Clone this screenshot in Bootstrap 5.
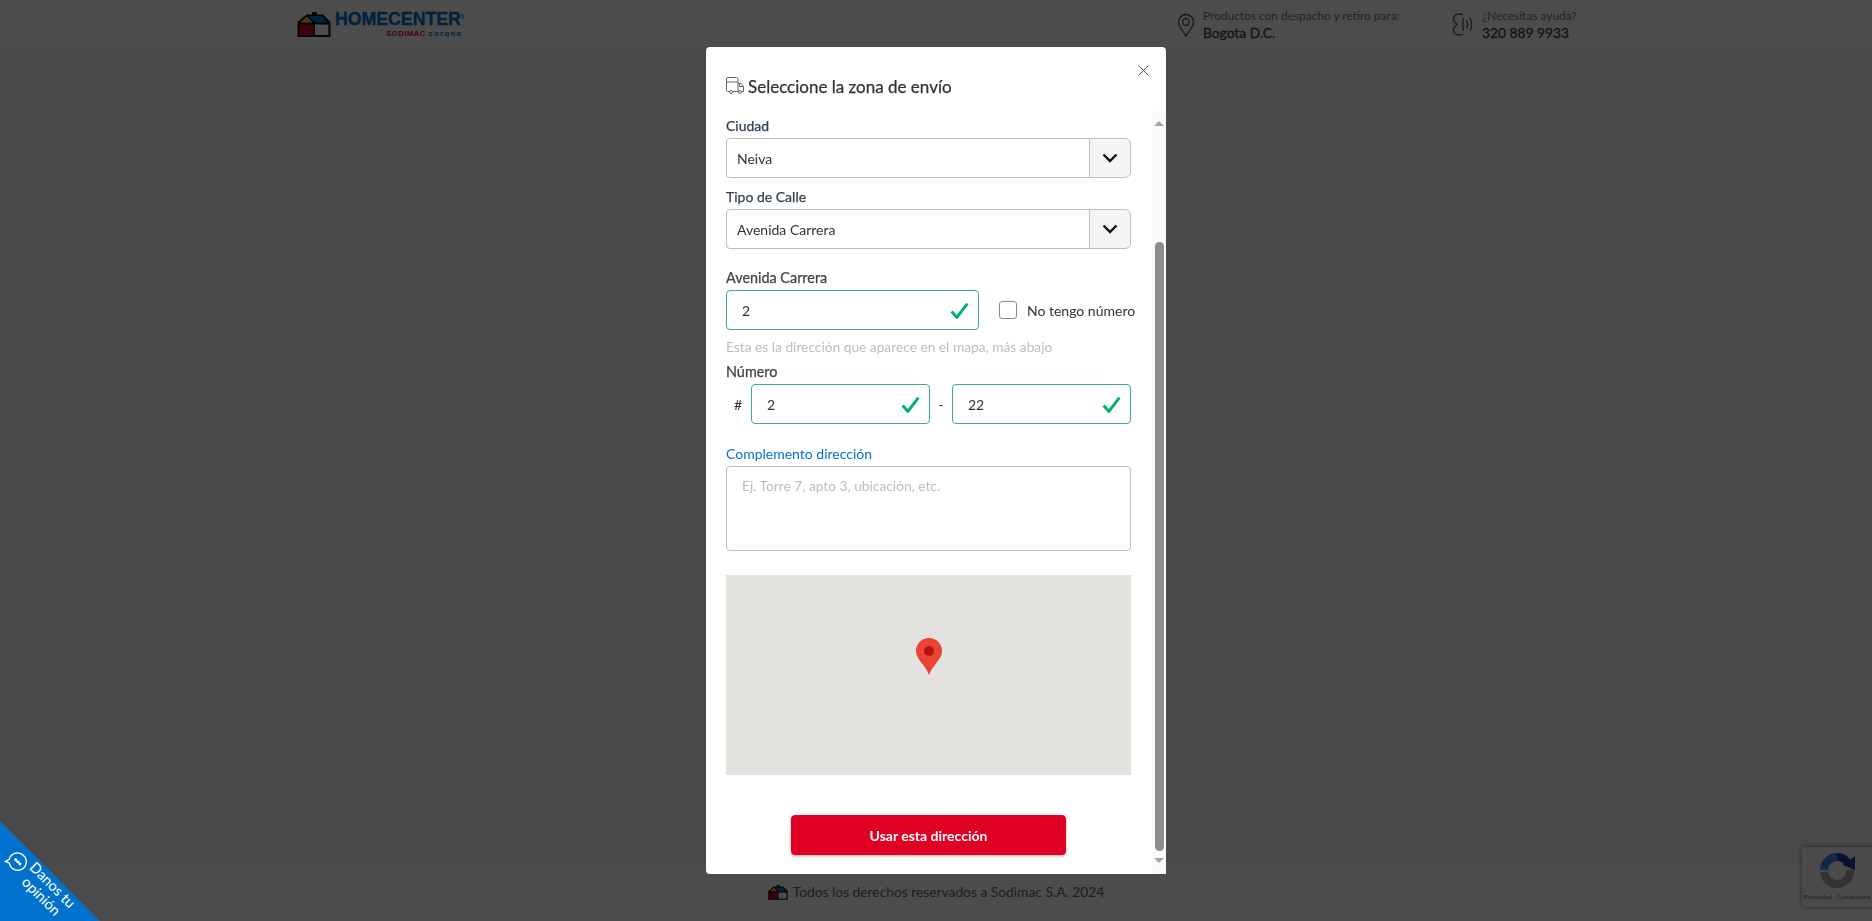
<!DOCTYPE html>
<html lang="es">
<head>
    <meta charset="UTF-8">
    <meta name="viewport" content="width=device-width, initial-scale=1.0">
    <title>Seleccione la zona de envío</title>
    <link href="https://cdn.jsdelivr.net/npm/bootstrap@5.3.2/dist/css/bootstrap.min.css" rel="stylesheet">
    <style>
        body { font-family: Lato, "Liberation Sans", sans-serif; font-size: 14px; background: #f6f6f6; color: #333; }
        .pagina { height: 100vh; overflow: hidden; }
        .cabecera { height: 50px; background: #fff; border-bottom: 1px solid #ddd; }
        .cabecera-interior { width: 1278px; height: 49px; margin: 0 auto; }
        .logo-texto { font-family: "Liberation Sans", sans-serif; line-height: 1; }
        .logo-marca { font-size: 17.7px; font-weight: 700; color: #0072ce; -webkit-text-stroke: .4px #0072ce; }
        .logo-marca sup { font-size: 5px; top: -1.2em; -webkit-text-stroke: 0; }
        .logo-sub { font-size: 7.5px; font-weight: 700; letter-spacing: .6px; text-align: right; margin-top: 1px; padding-right: 2px; }
        .logo-rojo { color: #e2001a; }
        .logo-azul { color: #0072ce; letter-spacing: 1.5px; }
        .info-pequena { font-size: 11.9px; line-height: 16px; color: #777; white-space: nowrap; }
        .info-grande { font-size: 13.8px; line-height: 17px; font-weight: 400; -webkit-text-stroke: .3px #444; color: #444; white-space: nowrap; }
        .info-bloque { margin-top: -1px; }
        .info-zona { width: 274px; }
        .info-ayuda { width: 124px; }
        .pie { height: 57px; background: #fff; color: #666; font-size: 13.8px; }
        .pie svg { margin-right: 1px; }
        .recaptcha-caja { position: fixed; right: 0; bottom: 14px; width: 70px; height: 60px; background: #f9f9f9; border-radius: 3px 0 0 3px; box-shadow: 0 0 5px rgba(0,0,0,.5); font-family: "Liberation Sans", sans-serif; font-size: 6px; color: #666; }
        .modal-backdrop { --bs-backdrop-opacity: .7; }
        .dialogo { width: 460px; max-width: 460px; margin: 47px auto 0; }
        .contenido-dialogo { height: 827px; border: 0; border-radius: 4px; --bs-modal-border-width: 0; }
        .dialogo-cabecera { height: 64px; padding: 0 0 0 20px; }
        .dialogo-titulo { font-size: 17px; color: #333; -webkit-text-stroke: .25px #333; line-height: 1; padding-top: 30px; }
        .cerrar-x { position: absolute; top: 18px; right: 17px; background: none; border: 0; padding: 0; line-height: 0; }
        .formulario { width: 405px; margin-left: 20px; margin-right: 21px; padding-top: 5px; }
        .etiqueta { line-height: 20px; margin-bottom: 2px; color: #2f4050; -webkit-text-stroke: .25px #2f4050; display: block; }
        .etiqueta-gris { color: #444; -webkit-text-stroke: .25px #444; font-size: 14.4px; }
        .etiqueta-azul { color: #0072ce; -webkit-text-stroke: 0; }
        .control { height: 40px; font-size: 14px; color: #333; border-color: #bfbfbf; border-radius: 4px; padding: 0 10px; }
        .control:focus { box-shadow: none; border-color: #bfbfbf; }
        .grupo-select .input-group-text { width: 42px; padding: 0; justify-content: center; background: #f5f5f5; border-color: #bfbfbf; }
        .sep-9 { margin-top: 9px; }
        .sep-19 { margin-top: 19px; }
        .sep-5 { margin-top: 5px; }
        .sep-20 { margin-top: 20px; }
        .sep-24 { margin-top: 24px; }
        .sep-40 { margin-top: 40px; }
        .control.is-valid, .control.is-valid:focus {
            padding: 0 36px 0 15px;
            border-color: #3bb273;
            box-shadow: none;
            background-size: 19px 17px;
            background-position: right 9px center;
            background-image: url("data:image/svg+xml,%3Csvg xmlns='http://www.w3.org/2000/svg' viewBox='0 0 18 16'%3E%3Cpath d='M1.5 9l5 5.5L16.5 1.5' fill='none' stroke='%2300b26b' stroke-width='2.8'/%3E%3C/svg%3E");
        }
        .campo-calle { width: 253px; flex-shrink: 0; }
        .marca-numero { margin-left: 20px; }
        .marca-numero .form-check-input { width: 18px; height: 18px; margin: 0 10px 0 0; border-color: #888; border-radius: 3px; flex-shrink: 0; }
        .marca-numero label { font-size: 14px; color: #333; white-space: nowrap; }
        .ayuda-mapa { font-size: 13.75px; line-height: 20px; margin-top: 7px; color: #bdbdbd; }
        .simbolo-numeral { width: 25px; padding-left: 8px; }
        .simbolo-guion { width: 22px; text-align: center; }
        .campo-numero { width: 179px; }
        .area-complemento { height: 85px; padding: 9px 15px; border-color: #bfbfbf; border-radius: 4px; font-size: 13.75px; resize: none; }
        .area-complemento::placeholder { color: #bdbdbd; }
        .mapa { height: 200px; background: #e3e2de; }
        .mapa svg { margin-bottom: 37px; }
        .btn-usar { width: 275px; height: 40px; background: #df0024; border-color: #df0024; color: #fff; font-size: 14px; font-weight: 700; border-radius: 4px; box-shadow: 0 1px 3px rgba(0,0,0,.35); }
        .barra { width: 14px; height: 763px; background: #fafafa; padding: 10px 2px 5px; }
        .flecha-arriba { border: 5px solid transparent; border-top: 0; border-bottom: 5px solid #a3a3a3; }
        .flecha-abajo { border: 5px solid transparent; border-bottom: 0; border-top: 5px solid #a3a3a3; }
        .guia { margin-top: 116px; height: 609px; width: 9px; background: #8c8c8c; border-radius: 5px; margin-bottom: 7px; }
        .esquina { position: fixed; left: 0; bottom: 0; width: 100px; height: 100px; background: #0072ce; clip-path: polygon(0 0, 100% 100%, 0 100%); z-index: 1060; color: #fff; }
        .esquina-giro { position: absolute; left: -2px; top: 44px; width: 82px; height: 36px; transform: rotate(45deg); }
        .esquina-texto { font-size: 14.5px; line-height: 16px; text-align: center; }
    </style>
</head>
<body>
<svg width="0" height="0" class="position-absolute">
    <symbol id="casa" viewBox="0 0 34 25">
        <rect x="15" y="0" width="5" height="4" fill="#111"/>
        <path d="M0.5 10L9.5 2.5H26L33.5 10V25H0.5Z" fill="#111"/>
        <path d="M3 10.5L10 4.5L15.5 10.5Z" fill="#f7d117"/>
        <path d="M11.5 4H25L31 10.5H17.5Z" fill="#0072ce"/>
        <rect x="2.5" y="12.5" width="14" height="10.5" fill="#d2002a"/>
        <rect x="18" y="12.5" width="13.5" height="10.5" fill="#fff"/>
    </symbol>
</svg>

<div class="pagina d-flex flex-column">
    <!-- Cabecera -->
    <header class="cabecera">
        <div class="cabecera-interior d-flex justify-content-between align-items-center">
            <div class="d-flex align-items-center gap-1">
                <svg width="34" height="25"><use href="#casa"/></svg>
                <div class="logo-texto">
                    <div class="logo-marca">HOMECENTER<sup>®</sup></div>
                    <div class="logo-sub"><span class="logo-rojo">SODIMAC</span> <span class="logo-azul">corona</span></div>
                </div>
            </div>
            <div class="d-flex align-items-center">
                <div class="d-flex align-items-center gap-2 info-zona">
                    <svg width="18" height="24" viewBox="0 0 18 24" fill="none" stroke="#555" stroke-width="1.3">
                        <path d="M9 23C6 18 1.5 14 1.5 9a7.5 7.5 0 0 1 15 0C16.500 14 12 18 9 23Z"/>
                        <circle cx="9" cy="9" r="3.300"/>
                    </svg>
                    <div class="info-bloque">
                        <div class="info-pequena">Productos con despacho y retiro para:</div>
                        <div class="info-grande">Bogota D.C.</div>
                    </div>
                </div>
                <div class="d-flex align-items-center gap-2 info-ayuda">
                    <svg width="23" height="23" viewBox="0 0 23 23" fill="none" stroke="#555" stroke-width="1.3" class="flex-shrink-0">
                        <path d="M12 2C8 0 3 1 2.500 6C2.500 9 5 10 6 11.500C5 13 2.500 14 2.500 17C3 22 8 23 12 21M12 5V18"/>
                        <path d="M15.500 7.500C16.800 10 16.800 13 15.500 15.500M19 5C21 9 21 14 19 18"/>
                    </svg>
                    <div class="info-bloque">
                        <div class="info-pequena">¿Necesitas ayuda?</div>
                        <div class="info-grande">320 889 9933</div>
                    </div>
                </div>
            </div>
        </div>
    </header>

    <main class="flex-grow-1"></main>

    <!-- Pie -->
    <footer class="pie d-flex justify-content-center align-items-center gap-1">
        <svg width="20" height="15"><use href="#casa"/></svg>
        <span>Todos los derechos reservados a Sodimac S.A. 2024</span>
    </footer>
</div>

<div class="recaptcha-caja d-flex flex-column align-items-center">
    <svg class="mt-1" width="38" height="38" viewBox="0 0 38 38" fill="none" stroke-width="8">
        <path d="M6 19A13 13 0 0 1 19 6" stroke="#4285f4"/>
        <path d="M19 6A13 13 0 0 1 30 12" stroke="#1c3aa9"/>
        <path d="M25 14L37 19V5Z" fill="#1c3aa9" stroke="none"/>
        <path d="M32 19A13 13 0 0 1 6 21" stroke="#ababab"/>
    </svg>
    <span class="mt-1">Privacidad - Condiciones</span>
</div>

<div class="modal-backdrop show"></div>

<!-- Modal de zona de envío -->
<div class="modal d-block">
    <div class="modal-dialog dialogo">
        <div class="modal-content contenido-dialogo">
            <div class="dialogo-cabecera position-relative">
                <div class="dialogo-titulo d-flex align-items-center gap-1">
                    <svg width="18" height="18" viewBox="0 0 18 18" fill="none" stroke="#666" stroke-width="1">
                        <path d="M3.500 14.500H1.500A1 1 0 0 1 .5 13.500V2A1.500 1.500 0 0 1 2 .5H10.500A1.500 1.500 0 0 1 12 2V14.500H6.500"/>
                        <path d="M.5 5H12M12 6.500H15L17.500 9.500V14.500H15.500M12 14.500H12.500M13.500 6.500V9.500H17.500"/>
                        <circle cx="5" cy="15" r="1.500"/>
                        <circle cx="14" cy="15" r="1.500"/>
                    </svg>
                    <span>Seleccione la zona de envío</span>
                </div>
                <button type="button" class="cerrar-x" aria-label="Cerrar">
                    <svg width="11" height="11" viewBox="0 0 11 11" stroke="#555" stroke-width="1"><path d="M.5 .5L10.500 10.500M10.500 .5L.5 10.500"/></svg>
                </button>
            </div>
            <div class="d-flex">
                <form class="formulario">
                    <label class="etiqueta">Ciudad</label>
                    <div class="input-group grupo-select">
                        <input type="text" class="form-control control" value="Neiva" readonly>
                        <span class="input-group-text">
                            <svg width="16" height="10" viewBox="0 0 16 10" fill="none" stroke="#111" stroke-width="2.400"><path d="M1.500 1.500L8 8L14.500 1.500"/></svg>
                        </span>
                    </div>

                    <label class="etiqueta sep-9">Tipo de Calle</label>
                    <div class="input-group grupo-select">
                        <input type="text" class="form-control control" value="Avenida Carrera" readonly>
                        <span class="input-group-text">
                            <svg width="16" height="10" viewBox="0 0 16 10" fill="none" stroke="#111" stroke-width="2.400"><path d="M1.500 1.500L8 8L14.500 1.500"/></svg>
                        </span>
                    </div>

                    <label class="etiqueta etiqueta-gris sep-19">Avenida Carrera</label>
                    <div class="d-flex align-items-center">
                        <div class="campo-calle">
                            <input type="text" class="form-control control is-valid" value="2">
                        </div>
                        <div class="marca-numero d-flex align-items-center">
                            <input type="checkbox" id="sinNumero" class="form-check-input">
                            <label for="sinNumero">No tengo número</label>
                        </div>
                    </div>
                    <div class="ayuda-mapa">Esta es la dirección que aparece en el mapa, más abajo</div>

                    <label class="etiqueta etiqueta-gris sep-5">Número</label>
                    <div class="d-flex align-items-center">
                        <span class="simbolo-numeral">#</span>
                        <div class="campo-numero"><input type="text" class="form-control control is-valid" value="2"></div>
                        <span class="simbolo-guion">-</span>
                        <div class="campo-numero"><input type="text" class="form-control control is-valid" value="22"></div>
                    </div>

                    <label class="etiqueta etiqueta-azul sep-20">Complemento dirección</label>
                    <textarea class="form-control area-complemento" placeholder="Ej. Torre 7, apto 3, ubicación, etc."></textarea>

                    <div class="mapa sep-24 d-flex justify-content-center align-items-center">
                        <svg width="26" height="37" viewBox="0 0 26 37">
                            <path d="M13 0C5.800 0 0 5.800 0 13c0 5 3 8.500 6 12.500 2.900 3.900 5.500 7 7 11.500 1.500-4.500 4.100-7.600 7-11.500 3-4 6-7.500 6-12.500C26 5.800 20.200 0 13 0z" fill="#ea4335"/>
                            <circle cx="13" cy="13" r="5" fill="#b31412"/>
                        </svg>
                    </div>

                    <div class="text-center sep-40">
                        <button type="button" class="btn btn-usar">Usar esta dirección</button>
                    </div>
                </form>
                <div class="barra d-flex flex-column align-items-center">
                    <div class="flecha-arriba"></div>
                    <div class="guia"></div>
                    <div class="flecha-abajo"></div>
                </div>
            </div>
        </div>
    </div>
</div>

<!-- Pestaña de opinión -->
<a class="esquina text-decoration-none">
    <div class="esquina-giro d-flex align-items-center">
        <svg width="22" height="22" viewBox="0 0 22 22" fill="none" stroke="#fff" stroke-width="1.400" class="flex-shrink-0">
            <path d="M11 2.500a8.500 8.500 0 1 1 -5 15.400L2 19.500l1.200-4.200A8.500 8.500 0 0 1 11 2.500Z"/>
            <circle cx="8" cy="11" r=".8" fill="#fff"/>
            <circle cx="11" cy="11" r=".8" fill="#fff"/>
            <circle cx="14" cy="11" r=".8" fill="#fff"/>
        </svg>
        <div class="esquina-texto flex-grow-1">Danos tu<br>opinión</div>
    </div>
</a>

<script src="https://cdn.jsdelivr.net/npm/bootstrap@5.3.2/dist/js/bootstrap.bundle.min.js"></script>
</body>
</html>
